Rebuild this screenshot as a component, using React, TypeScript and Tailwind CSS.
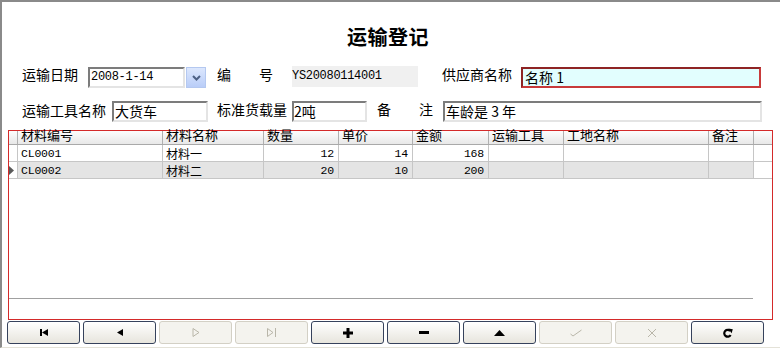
import React from "react";

const CJK = "font-['Noto_Sans_CJK_SC','Noto_Sans',sans-serif]";
const MONO = "font-['Liberation_Mono','Noto_Sans_CJK_SC',monospace]";

const sunken =
  "border-2 border-t-[#7c7c7c] border-l-[#7c7c7c] border-b-[#e4e4e4] border-r-[#e4e4e4] bg-white";

type Col = { w: string; title: string; right?: boolean; mono?: boolean };

const cols: Col[] = [
  { w: "w-[145px]", title: "材料编号", mono: true },
  { w: "w-[101px]", title: "材料名称" },
  { w: "w-[75px]", title: "数量", right: true, mono: true },
  { w: "w-[74px]", title: "单价", right: true, mono: true },
  { w: "w-[76px]", title: "金额", right: true, mono: true },
  { w: "w-[75px]", title: "运输工具" },
  { w: "w-[145px]", title: "工地名称" },
  { w: "w-[45px]", title: "备注" },
];

const rows = [
  ["CL0001", "材料一", "12", "14", "168", "", "", ""],
  ["CL0002", "材料二", "20", "10", "200", "", "", ""],
];

const DIS = "#b9b6a9";

function Icon({ k }: { k: number }) {
  switch (k) {
    case 0:
      return (
        <svg width="8" height="7" viewBox="0 0 8 7">
          <rect x="0" y="0" width="2" height="7" fill="#000" />
          <polygon points="8,0 2,3.5 8,7" fill="#000" />
        </svg>
      );
    case 1:
      return (
        <svg width="6" height="7" viewBox="0 0 6 7">
          <polygon points="6,0 0,3.5 6,7" fill="#000" />
        </svg>
      );
    case 2:
      return (
        <svg width="8" height="9" viewBox="0 0 8 9">
          <polygon points="1,0.5 7,4.5 1,8.5" fill="none" stroke={DIS} strokeWidth="1" />
        </svg>
      );
    case 3:
      return (
        <svg width="10" height="9" viewBox="0 0 10 9">
          <polygon points="0.5,0.5 6,4.5 0.5,8.5" fill="none" stroke={DIS} strokeWidth="1" />
          <line x1="8.5" y1="0" x2="8.5" y2="9" stroke={DIS} strokeWidth="1" />
        </svg>
      );
    case 4:
      return (
        <svg width="10" height="10" viewBox="0 0 10 10">
          <rect x="3.5" y="0" width="3" height="10" fill="#000" />
          <rect x="0" y="3.5" width="10" height="3" fill="#000" />
        </svg>
      );
    case 5:
      return (
        <svg width="10" height="3" viewBox="0 0 10 3">
          <rect x="0" y="0" width="10" height="3" fill="#000" />
        </svg>
      );
    case 6:
      return (
        <svg width="11" height="6" viewBox="0 0 11 6">
          <polygon points="0,6 5.5,0 11,6" fill="#000" />
        </svg>
      );
    case 7:
      return (
        <svg width="12" height="8" viewBox="0 0 12 8">
          <polyline points="0.5,5 3,7 11.5,1" fill="none" stroke={DIS} strokeWidth="1" />
        </svg>
      );
    case 8:
      return (
        <svg width="10" height="10" viewBox="0 0 10 10">
          <path d="M1 1 L9 9 M9 1 L1 9" fill="none" stroke={DIS} strokeWidth="1" />
        </svg>
      );
    default:
      return (
        <svg width="10" height="10" viewBox="0 0 10 10">
          <path d="M7.2 3 A3.4 3.4 0 1 0 7.6 7" fill="none" stroke="#000" strokeWidth="2.2" />
          <polygon points="5.2,0.5 9.8,1.2 8.6,5.2" fill="#000" />
        </svg>
      );
  }
}

export default function App() {
  const enabled = [true, true, false, false, true, true, true, false, false, true];
  return (
    <div className={`w-[780px] h-[350px] bg-white text-black ${CJK}`}>
      <div className="w-[780px] h-[348px] border-l-2 border-t-2 border-[#8a8a8a] border-b border-b-[#e4e2d8] flex flex-col">
        {/* title */}
        <div className="pt-[22px] h-[48px] pr-[6px] flex justify-center">
          <div className="text-[20px] leading-[26px] font-bold tracking-[0.5px]">运输登记</div>
        </div>

        {/* row 1 */}
        <div className="mt-[16px] h-[22px] flex text-[14px]">
          <div className="ml-[20px] w-[56px] leading-[16px] whitespace-nowrap">运输日期</div>
          <div className={`ml-[10px] self-end w-[97px] h-[21px] ${sunken} ${MONO} text-[12px] tracking-[-0.3px] leading-[17px] pl-[1px]`}>
            2008-1-14
          </div>
          <div className="ml-[1px] self-end w-[20px] h-[21px] border border-[#b4c8f0] bg-linear-to-b from-[#dce7fd] to-[#b9cdf8] flex items-center justify-center">
            <svg width="9" height="6" viewBox="0 0 9 6">
              <polyline points="1,1 4.5,4.5 8,1" fill="none" stroke="#4d6185" strokeWidth="2" />
            </svg>
          </div>
          <div className="ml-[11px] w-[56px] leading-[16px] flex justify-between">
            <span>编</span>
            <span>号</span>
          </div>
          <div className={`ml-[19px] self-start w-[126px] h-[21px] bg-[#f0f0f0] ${MONO} text-[12px] tracking-[-0.3px] leading-[20px]`}>
            YS20080114001
          </div>
          <div className="ml-[24px] w-[70px] leading-[16px] whitespace-nowrap">供应商名称</div>
          <div className="ml-[9px] self-end w-[240px] h-[21px] border-2 border-[#c83a3a] border-t-[#8e2424] border-l-[#8e2424] bg-[#e2fefe] text-[14px] leading-[17px] pl-[2px] whitespace-nowrap">
            名称 1
          </div>
        </div>

        {/* row 2 */}
        <div className="mt-[12px] h-[22px] flex text-[14px]">
          <div className="ml-[20px] w-[84px] leading-[20px] whitespace-nowrap">运输工具名称</div>
          <div className={`ml-[6px] self-end w-[96px] h-[21px] ${sunken} text-[14px] leading-[17px] pl-[1px]`}>大货车</div>
          <div className="ml-[9px] w-[70px] leading-[18px] whitespace-nowrap">标准货载量</div>
          <div className={`ml-[5px] self-end w-[75px] h-[21px] ${sunken} text-[14px] leading-[17px]`}>2吨</div>
          <div className="ml-[10px] w-[56px] leading-[18px] flex justify-between">
            <span>备</span>
            <span>注</span>
          </div>
          <div className={`ml-[10px] self-end w-[319px] h-[21px] ${sunken} text-[14px] leading-[17px] pl-[1px] whitespace-nowrap`}>
            车龄是 3 年
          </div>
        </div>

        {/* grid */}
        <div className="mt-[8px] ml-[6px] w-[765px] h-[190px] border border-[#d42a2a] flex flex-col">
          <div className="h-[14px] flex border-b border-[#a9a9a9] bg-linear-to-b from-[#fdfdfd] to-[#e8e8e8]">
            <div className="w-[9px] h-full border-r border-[#b0b0b0]" />
            {cols.map((c) => (
              <div key={c.title} className={`${c.w} h-full border-r border-[#b0b0b0] pl-[3px] text-[13px] leading-[8px] whitespace-nowrap`}>
                {c.title}
              </div>
            ))}
            <div className="flex-1 h-full" />
          </div>
          {rows.map((r, ri) => (
            <div key={ri} className="h-[17px] flex border-b border-[#c6c6c6]">
              <div className="w-[9px] h-full border-r border-[#c6c6c6] flex items-center">
                {ri === 1 && (
                  <svg width="5" height="9" viewBox="0 0 5 9">
                    <polygon points="0,0 5,4.5 0,9" fill="#5a5a5a" />
                  </svg>
                )}
              </div>
              {cols.map((c, ci) => (
                <div
                  key={ci}
                  className={`${c.w} h-full border-r border-[#c6c6c6] whitespace-nowrap flex items-center pt-[2px] ${
                    ri === 1 ? "bg-[#e4e4e4]" : "bg-white"
                  } ${c.right ? "justify-end pr-[4px]" : "pl-[3px]"} ${
                    c.mono ? `${MONO} text-[11.5px] tracking-[-0.2px]` : "text-[12px]"
                  } leading-[14px]`}
                >
                  {r[ci]}
                </div>
              ))}
              <div className="flex-1 h-full" />
            </div>
          ))}
          <div className="flex-1" />
          <div className="h-px w-[744px] bg-[#a0a0a0]" />
          <div className="h-[20px]" />
        </div>

        {/* navigator */}
        <div className="mt-[1px] ml-[5px] h-[23px] flex gap-[3px]">
          {enabled.map((en, i) => (
            <div
              key={i}
              className={`w-[73px] h-[23px] rounded-[3px] border flex items-center justify-center ${
                en
                  ? "border-[#36425c] bg-linear-to-b from-white to-[#e7e5dd]"
                  : "border-[#d3d0c5] bg-[#f4f3ee]"
              }`}
            >
              <Icon k={i} />
            </div>
          ))}
        </div>
      </div>
    </div>
  );
}
